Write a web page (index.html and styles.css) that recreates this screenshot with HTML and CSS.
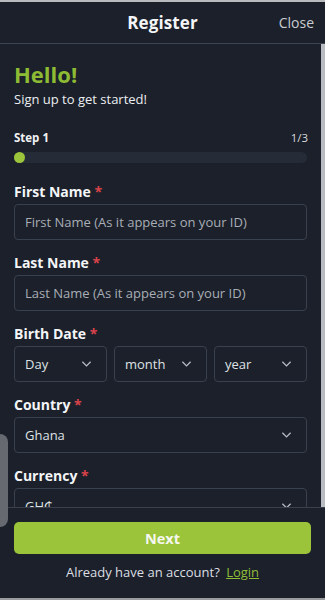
FILE: index.html
```html
<!DOCTYPE html>
<html lang="en">
<head>
<meta charset="utf-8">
<title>Register</title>
<link rel="stylesheet" href="styles.css">
</head>
<body>
<div class="app">
  <header class="topbar">
    <h1 class="title">Register</h1>
    <span class="close">Close</span>
  </header>
  <div class="scroll">
    <main class="content">
      <h2 class="hello">Hello!</h2>
      <p class="sub">Sign up to get started!</p>
      <div class="step-row"><span class="step">Step 1</span><span class="count">1/3</span></div>
      <div class="progress"><span class="dot"></span></div>

      <div class="field">
        <label class="label">First Name <span class="req">*</span></label>
        <div class="input"><span class="ph">First Name (As it appears on your ID)</span></div>
      </div>
      <div class="field">
        <label class="label">Last Name <span class="req">*</span></label>
        <div class="input"><span class="ph">Last Name (As it appears on your ID)</span></div>
      </div>
      <div class="field">
        <label class="label">Birth Date <span class="req">*</span></label>
        <div class="date-row">
          <div class="input select"><span class="val">Day</span><svg class="chev" viewBox="0 0 12 8"><path d="M1.5 1.5 6 6l4.5-4.5"/></svg></div>
          <div class="input select"><span class="val">month</span><svg class="chev" viewBox="0 0 12 8"><path d="M1.5 1.5 6 6l4.5-4.5"/></svg></div>
          <div class="input select"><span class="val">year</span><svg class="chev" viewBox="0 0 12 8"><path d="M1.5 1.5 6 6l4.5-4.5"/></svg></div>
        </div>
      </div>
      <div class="field">
        <label class="label">Country <span class="req">*</span></label>
        <div class="input select"><span class="val">Ghana</span><svg class="chev" viewBox="0 0 12 8"><path d="M1.5 1.5 6 6l4.5-4.5"/></svg></div>
      </div>
      <div class="field">
        <label class="label">Currency <span class="req">*</span></label>
        <div class="input select"><span class="val">GH₵</span><svg class="chev" viewBox="0 0 12 8"><path d="M1.5 1.5 6 6l4.5-4.5"/></svg></div>
      </div>
    </main>
    <div class="scrollbar"></div>
  </div>
  <footer class="footer">
    <button class="next">Next</button>
    <p class="already">Already have an account? <a class="login">Login</a></p>
  </footer>
  <div class="side-tab"></div>
</div>
</body>
</html>
```
FILE: styles.css
```css
* { box-sizing: border-box; }
html, body { margin: 0; padding: 0; }
body {
  background: #1b202a;
  font-family: "Open Sans", "Noto Sans", sans-serif;
  color: #f2f3f5;
}
.app {
  position: relative;
  width: 325px;
  height: 600px;
  display: flex;
  flex-direction: column;
  border-top: 2px solid #b8babd;
  border-bottom: 2px solid #9a9ca0;
  overflow: hidden;
}
.topbar {
  height: 42px;
  flex: none;
  display: flex;
  align-items: center;
  justify-content: center;
  position: relative;
  border-bottom: 1px solid #3d4553;
}
.title {
  margin: 0;
  font-size: 17px;
  font-weight: 700;
  color: #f4f5f7;
  letter-spacing: 0.1px;
}
.close {
  position: absolute;
  right: 11px;
  top: 11px;
  font-size: 14px;
  color: #c9ccd1;
}
.scroll {
  flex: 1;
  display: flex;
  overflow: hidden;
  border-bottom: 1px solid #3a414d;
}
.content {
  flex: 1;
  padding: 15px 14px 0 14px;
}
.scrollbar {
  width: 4px;
  background: #b9bcc1;
  flex: none;
}
.hello {
  margin: 0;
  font-size: 22px;
  line-height: 30px;
  font-weight: 700;
  color: #8dbb34;
}
.sub {
  margin: 1px 0 0;
  font-size: 13px;
  line-height: 18px;
  color: #eceef1;
}
.step-row {
  display: flex;
  justify-content: space-between;
  margin-top: 22px;
  font-size: 11.5px;
  line-height: 16px;
}
.step { font-weight: 700; color: #f1f2f4; }
.count { color: #d6d9dd; margin-right: -1px; }
.progress {
  margin-top: 6px;
  height: 11px;
  border-radius: 6px;
  background: #262c37;
  position: relative;
}
.dot {
  position: absolute;
  left: 0;
  top: 0;
  width: 11px;
  height: 11px;
  border-radius: 50%;
  background: #9cc53b;
}
.field { margin-top: 18px; }
.field + .field { margin-top: 12px; }
.label {
  display: block;
  font-size: 14px;
  line-height: 20px;
  padding-top: 1px;
  font-weight: 700;
  color: #f4f5f7;
  margin-bottom: 2px;
}
.req { color: #d9434a; }
.input {
  height: 36px;
  border: 1px solid #3a414e;
  border-radius: 4px;
  display: flex;
  align-items: center;
  padding: 0 10px;
  font-size: 13px;
}
.ph { color: #a9aeb6; }
.val { color: #dfe2e6; flex: 1; }
.chev {
  width: 11px;
  height: 8px;
  fill: none;
  stroke: #b7bbc2;
  stroke-width: 1.4;
  margin-right: 4px;
}
.date-row {
  display: grid;
  grid-template-columns: 1fr 1fr 1fr;
  gap: 7px;
}
.footer {
  flex: none;
  height: 90px;
  padding: 14px 14px 0 14px;
  display: flex;
  flex-direction: column;
  align-items: center;
}
.next {
  width: 297px;
  height: 32px;
  border: none;
  border-radius: 5px;
  background: #9bc43a;
  color: #f5f7f0;
  font-family: inherit;
  font-size: 14.5px;
  font-weight: 700;
}
.already {
  margin: 9px 0 0;
  font-size: 13px;
  line-height: 18px;
  color: #dcdfe3;
}
.login {
  color: #8fbd36;
  text-decoration: underline;
  margin-left: 3px;
}
.side-tab {
  position: absolute;
  left: 0;
  top: 432px;
  width: 8px;
  height: 93px;
  background: #66696f;
  border-radius: 0 8px 8px 0;
}
```
